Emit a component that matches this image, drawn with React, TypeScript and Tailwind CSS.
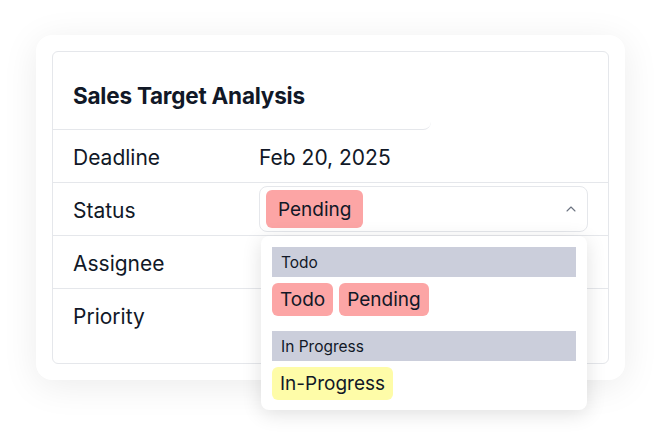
import { ChevronUp } from "lucide-react";

const font = { fontFamily: "Inter, 'Noto Sans', sans-serif" };

function Badge({ label, tone }: { label: string; tone: "red" | "yellow" }) {
  const bg = tone === "red" ? "bg-[#fca5a5]" : "bg-[#fefca8]";
  return (
    <span className={`${bg} inline-flex items-center rounded-md px-2 pt-[2px] h-[33px] text-[19px] text-[#111827]`}>
      {label}
    </span>
  );
}

function Row({ label, children, last }: { label: string; children?: React.ReactNode; last?: boolean }) {
  return (
    <div className={`flex items-center h-[53px] pl-5 ${last ? "" : "border-b border-[#e5e7eb]"}`}>
      <div className="w-[186px] pt-[3px] text-[21px] text-[#111827]">{label}</div>
      <div className="flex-1">{children}</div>
    </div>
  );
}

export default function App() {
  return (
    <div className="w-[660px] h-[445px] bg-white pl-[36px] pt-[35px]" style={font}>
      <div className="w-[589px] h-[345px] rounded-2xl bg-white p-4 shadow-[0_6px_36px_rgba(0,0,0,0.08)]">
        <div className="relative h-full rounded-md border border-[#e5e7eb]">
          <div className="w-[378px] h-[78px] flex items-center pl-5 border-b border-[#e5e7eb] rounded-br-lg">
            <h2 className="text-[22.5px] font-bold text-[#111827] tracking-[-0.01em] pt-[10px]">Sales Target Analysis</h2>
          </div>
          <Row label="Deadline">
            <span className="inline-block pt-[3px] text-[21px] text-[#111827]">Feb 20, 2025</span>
          </Row>
          <Row label="Status">
            <div className="mr-5 h-[46px] rounded-lg border border-[#e5e7eb] flex items-center justify-between pl-[6px] pr-[8px]">
              <span className="inline-flex items-center rounded-md px-3 pt-[3px] h-[38px] bg-[#fca5a5] text-[19px] text-[#111827]">Pending</span>
              <ChevronUp size={16} strokeWidth={1.6} className="text-[#6b7280]" />
            </div>
          </Row>
          <Row label="Assignee" />
          <Row label="Priority" last />

          <div className="absolute left-[208px] top-[184px] w-[326px] rounded-lg bg-white shadow-[0_4px_20px_rgba(0,0,0,0.12)] px-[11px] pt-[11px] pb-[10px]">
            <div className="h-[30px] bg-[#cbcedb] flex items-center pl-[9px] pt-[1px] text-[15.5px] text-[#111827]">Todo</div>
            <div className="flex gap-[6px] mt-[6px]">
              <Badge label="Todo" tone="red" />
              <Badge label="Pending" tone="red" />
            </div>
            <div className="h-[30px] bg-[#cbcedb] flex items-center pl-[9px] pt-[1px] text-[15.5px] text-[#111827] mt-[15px]">In Progress</div>
            <div className="flex mt-[6px]">
              <Badge label="In-Progress" tone="yellow" />
            </div>
          </div>
        </div>
      </div>
    </div>
  );
}
